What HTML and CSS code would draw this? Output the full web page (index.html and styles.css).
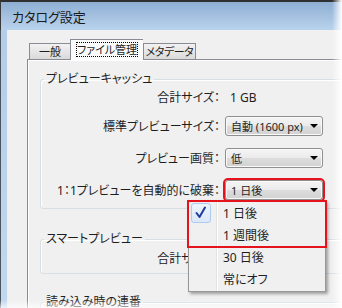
FILE: index.html
```html
<!DOCTYPE html>
<html lang="ja">

<head>
    <meta charset="UTF-8">
    <title>カタログ設定</title>
    <link rel="stylesheet" href="styles.css">
</head>

<body>
    <div class="window">
        <div class="titlebar">カタログ設定</div>

        <div class="frame">
            <div class="frame-edge"></div>
            <div class="client">
                <div class="tabs">
                    <div class="tab tab-general">一般</div>
                    <div class="tab tab-files active"><span class="focus">ファイル管理</span></div>
                    <div class="tab tab-meta">メタデータ</div>
                </div>

                <div class="panel">
                    <fieldset class="group group-cache">
                        <legend>プレビューキャッシュ</legend>
                        <div class="row info">
                            <span class="label">合計サイズ：</span>
                            <span class="value">1 GB</span>
                        </div>
                        <div class="row">
                            <span class="label">標準プレビューサイズ：</span>
                            <div class="select">自動 (1600 px)</div>
                        </div>
                        <div class="row">
                            <span class="label">プレビュー画質：</span>
                            <div class="select">低</div>
                        </div>
                        <div class="row">
                            <span class="label">1：1プレビューを自動的に破棄：</span>
                            <!-- red mark is part of the screenshot annotation -->
                            <div class="select marked">1 日後</div>
                        </div>
                    </fieldset>

                    <fieldset class="group group-smart">
                        <legend>スマートプレビュー</legend>
                        <div class="row info">
                            <span class="label">合計サイズ：</span>
                        </div>
                    </fieldset>

                    <fieldset class="group group-import">
                        <legend>読み込み時の連番</legend>
                    </fieldset>
                </div>
            </div>
        </div>

        <div class="menu">
            <div class="menu-marked">
                <div class="menu-item checked">
                    <span class="check">
                        <svg width="20" height="20" viewBox="0 0 20 20">
                            <path d="M5.5 10 L8.5 14 L14 4.5" fill="none" stroke="#1d3c9e" stroke-width="2"
                                stroke-linejoin="round" stroke-linecap="round" />
                        </svg>
                    </span>
                    <span class="item-text">1 日後</span>
                </div>
                <div class="menu-item"><span class="check"></span><span class="item-text">1 週間後</span></div>
            </div>
            <div class="menu-item"><span class="check"></span><span class="item-text">30 日後</span></div>
            <div class="menu-item"><span class="check"></span><span class="item-text">常にオフ</span></div>
        </div>

        <div class="fade-right"></div>
        <div class="fade-bottom"></div>
    </div>
</body>

</html>
```

FILE: styles.css
```css
body {
    margin: 0;
    font-family: 'Noto Sans', 'Noto Sans CJK JP', sans-serif;
    font-size: 12px;
    font-feature-settings: "palt";
    color: #1e1e1e;
    background: #ffffff;
}

.window {
    position: relative;
    width: 342px;
    height: 308px;
    overflow: hidden;
    background: #f0f0f0;
}

/* title bar */
.titlebar {
    box-sizing: border-box;
    height: 30px;
    padding: 3px 0 0 11px;
    border-top: 2px solid #303030;
    border-left: 1px solid #3a3a3a;
    font-size: 13px;
    line-height: 24px;
    color: #1a1a1a;
    background: linear-gradient(to bottom, #8eaed3, #b9d3ec);
}

.frame {
    display: flex;
    height: 278px;
}

.frame-edge {
    flex-shrink: 0;
    width: 6px;
    border-left: 1px solid #4a5560;
    border-right: 1px solid #e8f0f8;
    background: linear-gradient(to bottom, #b4cde8, #c2d8ee);
}

.client {
    flex: 1;
    min-width: 0;
    padding: 10px 0 0 19px;
    background: #f0f0f0;
}

/* tabs */
.tabs {
    display: flex;
    align-items: flex-end;
    height: 19px;
    margin-left: 2px;
}

.tab {
    box-sizing: border-box;
    height: 16px;
    font-size: 11px;
    line-height: 15px;
    text-align: center;
    border: 1px solid #898c95;
    border-bottom: none;
    border-right: none;
    background: linear-gradient(to bottom, #f2f2f2, #dadada);
}

.tab-general {
    width: 41px;
}

.tab-files {
    width: 73px;
}

.tab-meta {
    width: 53px;
    letter-spacing: -0.5px;
    border-right: 1px solid #898c95;
}

.tab.active {
    position: relative;
    z-index: 1;
    height: 21px;
    margin-bottom: -1px;
    line-height: 19px;
    background: #fbfbfb;
}

.focus {
    padding: 0 1px;
    outline: 1px dotted #000;
    outline-offset: -1px;
}

/* tab page */
.panel {
    width: 400px;
    height: 260px;
    padding: 10px 0 0 12px;
    border: 1px solid #898c95;
    box-shadow: inset 1px 1px 0 #ffffff;
    background: #f0f0f0;
}

.group {
    width: 330px;
    margin: 0;
    padding: 6px 0 8px;
    border: 1px solid #d5dfe5;
    border-radius: 3px;
    box-shadow: inset 1px 1px 0 #ffffff;
    display: flex;
    flex-direction: column;
    gap: 12px;
}

.group legend {
    margin-left: 3px;
    padding: 0 2px;
    line-height: 14px;
}

.group-cache {
    margin-top: 2px;
}

.group-smart {
    margin-top: 23px;
    padding-top: 7px;
}

.group-import {
    margin-top: 21px;
    height: 40px;
}

.row {
    display: grid;
    grid-template-columns: 179px auto;
    column-gap: 5px;
    align-items: center;
}

.row.info {
    line-height: 12px;
}

.label {
    text-align: right;
    white-space: nowrap;
}

.value {
    padding-left: 5px;
}

/* combo box */
.select {
    box-sizing: border-box;
    width: 98px;
    height: 20px;
    display: flex;
    align-items: center;
    padding: 0 4px 0 5px;
    border: 1px solid #8e8f8f;
    border-radius: 3px;
    box-shadow: inset 0 0 0 1px #fafafa;
    background: linear-gradient(to bottom, #f4f4f4 0%, #ebebeb 50%, #dddddd 51%, #d2d2d2 100%);
    font-size: 11px;
    white-space: nowrap;
}

.select::after {
    content: "";
    margin-left: auto;
    border-left: 4px solid transparent;
    border-right: 4px solid transparent;
    border-top: 4px solid #000;
}

.select.marked {
    outline: 2px solid #e5141c;
}

/* open dropdown list */
.menu {
    position: absolute;
    left: 188px;
    top: 200px;
    width: 136px;
    padding: 1px 0;
    border: 1px solid #979797;
    background: linear-gradient(to right, transparent 27px, #e2e3e3 27px, #e2e3e3 28px, #ffffff 28px, #ffffff 29px, transparent 29px), #f0f0f0;
    box-shadow: 2px 2px 3px rgba(0, 0, 0, 0.35);
}

.menu-marked {
    outline: 2px solid #e5141c;
    outline-offset: 0;
}

.menu-item {
    display: flex;
    align-items: center;
    height: 22px;
    padding-left: 2px;
}

.check {
    box-sizing: border-box;
    width: 20px;
    height: 20px;
}

.checked .check {
    border: 1px solid #aecbef;
    border-radius: 3px;
    background: linear-gradient(to bottom, #eef5fd, #dbe8f8);
}

.checked .check svg {
    display: block;
    margin: -1px;
}

.item-text {
    padding-left: 12px;
}

/* screenshot edge fades */
.fade-right {
    position: absolute;
    top: 0;
    right: 0;
    width: 10px;
    height: 100%;
    background: linear-gradient(to right, rgba(255, 255, 255, 0), #ffffff);
}

.fade-bottom {
    position: absolute;
    left: 0;
    bottom: 0;
    width: 100%;
    height: 8px;
    background: linear-gradient(to bottom, rgba(255, 255, 255, 0), rgba(255, 255, 255, 0.7));
}
```
